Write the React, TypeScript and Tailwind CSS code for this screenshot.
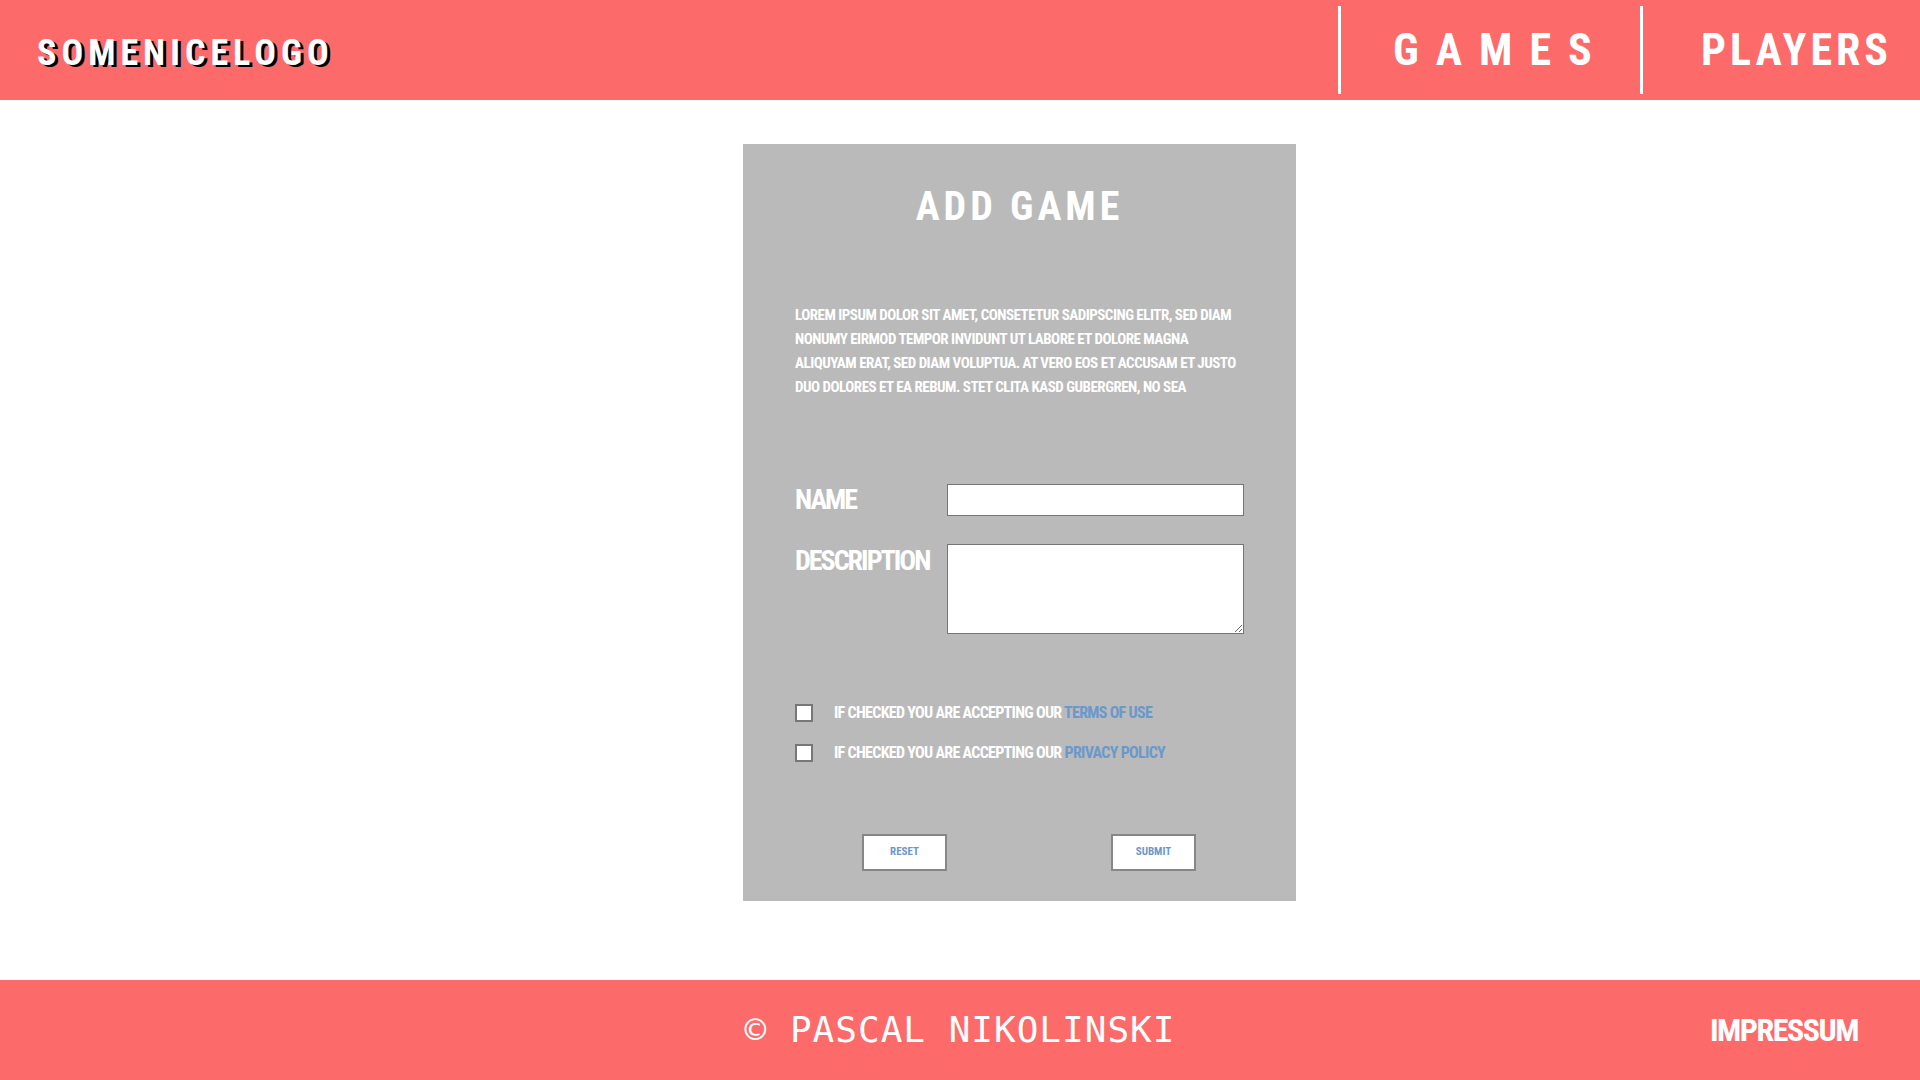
import React from "react";

const bebas = "font-['Roboto_Condensed','DejaVu_Sans_Condensed','Open_Sans',sans-serif] font-stretch-[75%] font-bold uppercase";

const NavItem = ({ label, className }: { label: string; className?: string }) => {
  return (
    <a href="#" className={`my-[6px] flex items-center border-l-[3px] border-white text-white text-[44px] leading-none ${bebas} ${className}`}>
      {label}
    </a>
  );
};

const Header = () => {
  return (
    <header className="h-[100px] w-full bg-[#fc6a6a] flex items-stretch justify-between">
      <div className={`pl-[37px] pt-[6px] flex items-center text-white text-[36px] leading-none tracking-[5px] [text-shadow:3px_2px_0_#000] ${bebas}`}>
        SomeNiceLogo
      </div>

      <nav className="flex items-stretch">
        <NavItem label="Games" className="w-[302px] pl-[52px] tracking-[17px]" />
        <NavItem label="Players" className="w-[280px] pl-[58px] tracking-[4px]" />
      </nav>
    </header>
  );
};

const CheckRow = ({ link }: { link: string }) => {
  return (
    <label className="flex items-center h-[22px]">
      <input type="checkbox" className="appearance-none size-[18px] bg-white border-2 border-[#777777] shrink-0" />
      <span className={`ml-[21px] text-[16px] leading-[22px] tracking-[-0.7px] whitespace-nowrap text-white ${bebas}`}>
        If checked you are accepting our <a href="#" className="text-[#6a98ca]">{link}</a>
      </span>
    </label>
  );
};

const AddGameCard = () => {
  return (
    <section className="ml-[743px] mt-[44px] w-[553px] bg-[#bababa] px-[52px] pt-[44px] pb-[30px] flex flex-col">
      <h1 className={`text-center text-white text-[40px] leading-[38px] tracking-[4px] ${bebas}`}>Add Game</h1>

      <p className={`mt-[77px] text-white text-[15px] leading-[24px] tracking-[-0.5px] whitespace-nowrap ${bebas}`}>
        Lorem ipsum dolor sit amet, consetetur sadipscing elitr, sed diam<br />
        nonumy eirmod tempor invidunt ut labore et dolore magna<br />
        aliquyam erat, sed diam voluptua. At vero eos et accusam et justo<br />
        duo dolores et ea rebum. Stet clita kasd gubergren, no sea
      </p>

      <div className="mt-[85px] flex items-center">
        <span className={`w-[152px] text-white text-[28px] leading-none tracking-[-2px] ${bebas}`}>Name</span>
        <input type="text" className="w-[297px] h-[32px] bg-white border border-[#767676] outline-none px-1" />
      </div>

      <div className="mt-[28px] flex items-start">
        <span className={`w-[152px] mt-[3px] text-white text-[28px] leading-none tracking-[-2px] whitespace-nowrap ${bebas}`}>Description</span>
        <textarea className="w-[297px] h-[90px] bg-white border border-[#767676] outline-none px-1" />
      </div>

      <div className="mt-[68px] flex flex-col gap-[18px]">
        <CheckRow link="Terms of use" />
        <CheckRow link="Privacy Policy" />
      </div>

      <div className="mt-[70px] pl-[67px] pr-[48px] flex justify-between">
        <button className={`w-[85px] h-[37px] bg-white border-2 border-[#878787] text-[#6a98ca] text-[11px] ${bebas}`}>Reset</button>
        <button className={`w-[85px] h-[37px] bg-white border-2 border-[#878787] text-[#6a98ca] text-[11px] ${bebas}`}>Submit</button>
      </div>
    </section>
  );
};

const Footer = () => {
  return (
    <footer className="h-[100px] w-full bg-[#fc6a6a] flex items-center relative">
      <p className="w-full text-center text-white text-[36px] leading-none tracking-[1px] font-['DejaVu_Sans_Mono',monospace]">
        © PASCAL NIKOLINSKI
      </p>
      <a href="#" className={`absolute right-[62px] top-1/2 -translate-y-1/2 text-white text-[32px] leading-none tracking-[-1.5px] ${bebas}`}>
        Impressum
      </a>
    </footer>
  );
};

export default function App() {
  return (
    <div className="min-h-screen w-full bg-white flex flex-col">
      <Header />
      <main className="flex-1 flex items-start">
        <AddGameCard />
      </main>
      <Footer />
    </div>
  );
}
